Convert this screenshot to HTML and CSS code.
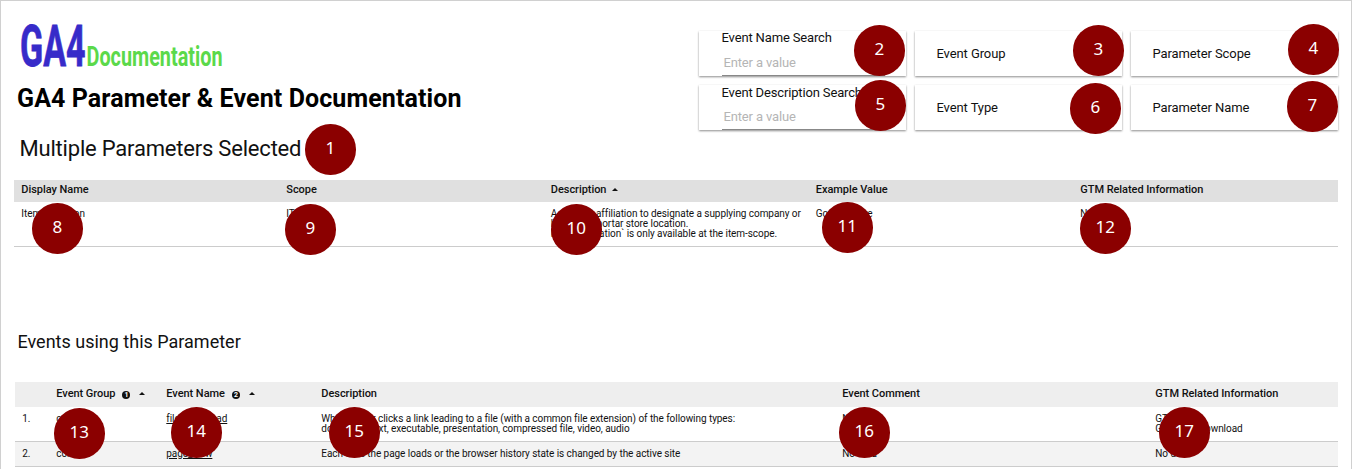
FILE: index.html
```html
<!DOCTYPE html>
<html lang="en">
<head>
<meta charset="utf-8">
<title>GA4 Parameter &amp; Event Documentation</title>
<link rel="stylesheet" href="styles.css">
</head>
<body>
<main class="report">
  <header class="top">
    <div class="heading">
      <svg class="logo" width="206" height="50" viewBox="0 0 206 50" role="img" aria-label="GA4 Documentation">
        <text class="logo-main" x="0" y="45.5" textLength="65.5" lengthAdjust="spacingAndGlyphs">GA4</text>
        <text class="logo-sub" x="66.5" y="45.5" textLength="136" lengthAdjust="spacingAndGlyphs">Documentation</text>
      </svg>
      <h1 class="title">GA4 Parameter &amp; Event Documentation</h1>
      <p class="selected">Multiple Parameters Selected</p>
    </div>
    <div class="filters">
      <div class="card search first"><label>Event Name Search</label><div class="field">Enter a value</div></div>
      <div class="card">Event Group</div>
      <div class="card">Parameter Scope</div>
      <div class="card search"><label>Event Description Search</label><div class="field">Enter a value</div></div>
      <div class="card">Event Type</div>
      <div class="card">Parameter Name</div>
    </div>
  </header>

  <section class="params">
    <div class="row head"><span>Display Name</span><span>Scope</span><span>Description<i class="sort"></i></span><span>Example Value</span><span>GTM Related Information</span></div>
    <div class="row data"><span>Item affiliation</span><span>ITEM</span><span>A product affiliation to designate a supplying company or<br>brick and mortar store location.<br>Note: `affiliation` is only available at the item-scope.</span><span>Google Store</span><span>No data</span></div>
  </section>

  <h2 class="subtitle">Events using this Parameter</h2>

  <section class="events">
    <div class="row head"><span></span><span>Event Group<b class="order">1</b><i class="sort"></i></span><span>Event Name<b class="order">2</b><i class="sort"></i></span><span>Description</span><span>Event Comment</span><span>GTM Related Information</span></div>
    <div class="row data"><span>1.</span><span>content</span><span><a>file_download</a></span><span>When a user clicks a link leading to a file (with a common file extension) of the following types:<br>document, text, executable, presentation, compressed file, video, audio</span><span>No data</span><span>GTM Tag:<br>GA4 - file_download</span></div>
    <div class="row data alt"><span>2.</span><span>content</span><span><a>page_view</a></span><span>Each time the page loads or the browser history state is changed by the active site</span><span>No data</span><span>No data</span></div>
  </section>

  <div class="pin" style="left:305px;top:124px">1</div>
  <div class="pin" style="left:854px;top:25px">2</div>
  <div class="pin" style="left:1073px;top:25px">3</div>
  <div class="pin" style="left:1288px;top:24px">4</div>
  <div class="pin" style="left:855px;top:80px">5</div>
  <div class="pin" style="left:1070px;top:83px">6</div>
  <div class="pin" style="left:1287px;top:81px">7</div>
  <div class="pin" style="left:32px;top:203px">8</div>
  <div class="pin" style="left:285px;top:204px">9</div>
  <div class="pin" style="left:551px;top:204px">10</div>
  <div class="pin" style="left:822px;top:202px">11</div>
  <div class="pin" style="left:1080px;top:203px">12</div>
  <div class="pin" style="left:54px;top:408px">13</div>
  <div class="pin" style="left:171px;top:407px">14</div>
  <div class="pin" style="left:329px;top:407px">15</div>
  <div class="pin" style="left:839px;top:407px">16</div>
  <div class="pin" style="left:1159px;top:407px">17</div>
</main>
</body>
</html>
```
FILE: styles.css
```css
* { box-sizing: border-box; }
body { margin: 0; font-family: Roboto, sans-serif; color: #111; background: #fff; }
.report { position: relative; width: 1352px; height: 469px; overflow: hidden; border: 1px solid #d0d0d0; border-bottom: 0; padding: 0 13px; white-space: nowrap; }
.top { display: flex; justify-content: space-between; height: 179px; }
.heading { padding: 19px 0 0 3px; }
.logo { display: block; margin-left: 3px; overflow: visible; }
.logo-main { font: 700 57px Roboto, sans-serif; fill: #372bc9; stroke: #372bc9; stroke-width: .8px; }
.logo-sub { font: 700 27px Roboto, sans-serif; fill: #5bd94a; }
.title { margin: 12px 0 0; font-size: 25px; line-height: 34px; font-weight: 700; letter-spacing: .1px; color: #000; }
.selected { margin: 18px 0 0 2.5px; font-size: 22px; line-height: 30px; font-weight: 400; letter-spacing: -.2px; }
.filters { display: grid; grid-template-columns: repeat(3, 207px); grid-auto-rows: 45px; gap: 9px; padding-top: 30px; align-content: start; }
.card { display: flex; align-items: center; padding-left: 21.5px; font-size: 13px; letter-spacing: -.1px; background: #fff; box-shadow: 0 1px 2px rgba(0,0,0,.45); }
.search { flex-direction: column; align-items: stretch; padding-left: 22.5px; letter-spacing: -.15px; }
.search label { line-height: 15px; }
.first label { line-height: 13px; height: 15px; }
.field { height: 30px; padding: 9px 2px 0; line-height: 16px; color: #b5b5b5; border-bottom: 1px solid #888; width: 163px; }
.row { display: grid; font-size: 10px; line-height: 10px; letter-spacing: -.06px; }
.head { font-size: 11px; font-weight: 500; letter-spacing: -.05px; }
.params { width: 1324px; }
.params .row { grid-template-columns: 265px 264.5px 265px 264.5px 1fr; padding-left: 7.3px; }
.params .head { height: 22px; background: #e0e0e0; line-height: 19px; }
.params .data { height: 45px; padding-top: 7px; border-bottom: 1px solid #ccc; }
.subtitle { margin: 83px 0 0 3.5px; font-size: 18px; line-height: 24px; font-weight: 400; }
.events { margin: 28px 0 0 1px; width: 1323px; }
.events .row { grid-template-columns: 34px 110px 155px 521px 313px 1fr; padding-left: 7.3px; }
.events .head { height: 25px; line-height: 23px; background: #eee; }
.events .data { height: 35px; padding-top: 7px; border-bottom: 1px solid #ccc; }
.events .alt { height: 25px; background: #f3f3f3; }
.events a { text-decoration: underline; }
.sort { display: inline-block; margin-left: 6px; vertical-align: 2px; border: 3px solid transparent; border-top: 0; border-bottom: 3px solid #111; }
.order { display: inline-block; width: 8px; height: 8px; margin-left: 7px; border-radius: 50%; background: #111; color: #fff; font-size: 7px; line-height: 8px; text-align: center; }
.order + .sort { margin-left: 9px; }
.pin { position: absolute; margin: -1px 0 0 -1px; width: 50.5px; height: 50.5px; border-radius: 50%; background: #8b0000; color: #fff; font: 17px/48px "Noto Sans", sans-serif; text-align: center; }
```
